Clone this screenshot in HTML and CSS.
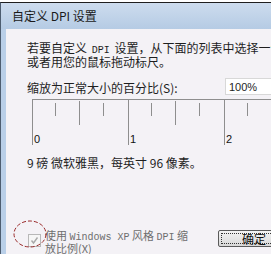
FILE: index.html
```html
<!DOCTYPE html>
<html lang="zh-CN">
<head>
    <meta charset="UTF-8">
    <title>自定义 DPI 设置</title>
    <link rel="stylesheet" href="styles.css">
</head>
<body>
    <div class="window">
        <div class="titlebar">自定义 DPI 设置</div>
        <div class="client">
            <p class="intro">若要自定义 <span class="mono wide">DPI</span> 设置，从下面的列表中选择一个百分比，<br>或者用您的鼠标拖动标尺。</p>

            <div class="scale-row">
                <label class="scale-label">缩放为正常大小的百分比(<u>S</u>):</label>
                <div class="combo">
                    <span class="combo-value">100%</span>
                    <span class="combo-arrow">▾</span>
                </div>
            </div>

            <div class="ruler">
                <div class="inch">
                    <div class="ticks">
                        <span class="tick minor"></span>
                        <span class="tick medium"></span>
                        <span class="tick minor"></span>
                    </div>
                    <span class="inch-label">0</span>
                </div>
                <div class="inch">
                    <div class="ticks">
                        <span class="tick minor"></span>
                        <span class="tick medium"></span>
                        <span class="tick minor"></span>
                    </div>
                    <span class="inch-label">1</span>
                </div>
                <div class="inch">
                    <div class="ticks">
                        <span class="tick minor"></span>
                        <span class="tick medium"></span>
                        <span class="tick minor"></span>
                    </div>
                    <span class="inch-label">2</span>
                </div>
            </div>

            <p class="info">9 磅 微软雅黑，每英寸 96 像素。</p>

            <div class="bottom-row">
                <span class="checkbox">
                    <svg width="11" height="11" viewBox="0 0 11 11"><path d="M2.5 5.5 L4.5 8 L8.5 2.5" fill="none" stroke="#a9a9a9" stroke-width="1.4"/></svg>
                </span>
                <span class="check-label">使用 <span class="mono">Windows XP</span> 风格 <span class="mono">DPI</span> 缩<br>放比例(<u>X</u>)</span>
                <button class="ok-button"><span class="focus-ring">确定</span></button>

                <svg class="mark" width="36" height="30" viewBox="0 0 36 30">
                    <ellipse cx="17" cy="15" rx="16" ry="13" fill="none" stroke="#9a2b2b" stroke-width="1" stroke-dasharray="4 2"/>
                </svg>
            </div>
        </div>
    </div>
</body>
</html>
```

FILE: styles.css
```css
body {
    margin: 0;
    padding: 0;
    width: 271px;
    height: 254px;
    overflow: hidden;
    background-color: #ffffff;
    font-family: "Noto Sans CJK SC", sans-serif;
    color: #1e1e1e;
}

.window {
    width: 340px;
    height: 251px;
    margin-top: 2px;
    border-top: 1px solid #1f1f1f;
    border-left: 1px solid #4d5d70;
    background-color: #b9cfe8;
    display: flex;
    flex-direction: column;
}

.titlebar {
    height: 28px;
    line-height: 26px;
    padding-left: 11px;
    font-size: 12px;
    color: #1a1a1a;
    background: linear-gradient(to bottom, #cddcee, #b5cbe4);
}

.client {
    flex: 1;
    margin-left: 5px;
    padding-left: 21px;
    background-color: #f4f2f6;
    position: relative;
}

.mono {
    font-family: "Liberation Mono", monospace;
    font-size: 10px;
}

.mono.wide {
    padding: 0 2px;
}

.intro {
    margin: 13px 0 0 0;
    font-size: 12px;
    line-height: 11px;
    white-space: nowrap;
}

.scale-row {
    display: grid;
    grid-template-columns: 198px auto;
    align-items: center;
    margin-top: 11px;
    height: 17px;
}

.scale-label {
    font-size: 12px;
    line-height: 14px;
    white-space: nowrap;
    padding-top: 2px;
}

.scale-label u,
.check-label u {
    text-decoration: none;
}

.combo {
    width: 70px;
    height: 15px;
    border: 1px solid #d8d8d8;
    background-color: #ffffff;
    display: flex;
    align-items: center;
    justify-content: space-between;
    font-family: "Liberation Sans", sans-serif;
    font-size: 11px;
}

.combo-value {
    padding-left: 3px;
}

.combo-arrow {
    padding-right: 8px;
    font-size: 9px;
    color: #444;
}

.ruler {
    display: flex;
    margin-top: 4px;
    margin-left: 5px;
    height: 45px;
    border-top: 1px solid #8e8e8e;
}

.inch {
    width: 96px;
    flex: 0 0 96px;
    box-sizing: border-box;
    border-left: 1px solid #8e8e8e;
    display: flex;
    flex-direction: column;
    justify-content: space-between;
}

.ticks {
    display: flex;
    align-items: flex-start;
    padding-top: 1px;
}

.tick {
    display: block;
    width: 24px;
    box-sizing: border-box;
    border-right: 1px solid #8e8e8e;
}

.tick:first-child {
    width: 23px;
}

.tick.minor {
    height: 13px;
    margin-top: 2px;
}

.tick.medium {
    height: 24px;
}

.inch-label {
    font-family: "Liberation Sans", sans-serif;
    font-size: 11px;
    line-height: 10px;
    padding-left: 1px;
    padding-bottom: 1px;
    color: #111;
}

.info {
    margin: 11px 0 0 0;
    font-size: 12px;
    line-height: 14px;
    white-space: nowrap;
}

.bottom-row {
    display: flex;
    align-items: flex-start;
    margin-top: 60px;
}

.checkbox {
    width: 13px;
    height: 13px;
    flex: 0 0 13px;
    box-sizing: border-box;
    margin-left: 1px;
    margin-top: 4px;
    border: 1px solid #b8b8b8;
    background-color: #f6f6f6;
    display: flex;
    align-items: center;
    justify-content: center;
}

.check-label {
    flex: 0 0 173px;
    margin-left: 4px;
    font-size: 11px;
    line-height: 11px;
    color: #6e6e6e;
    white-space: nowrap;
}

.ok-button {
    width: 72px;
    height: 17px;
    padding: 2px;
    border: 1px solid #5a5a5a;
    border-radius: 2px;
    background: linear-gradient(to bottom, #f4f4f4, #e6e6e6 50%, #d8d8d8);
    font-family: "Noto Sans CJK SC", sans-serif;
    font-size: 12px;
    color: #111;
    display: flex;
}

.focus-ring {
    flex: 1;
    border: 1px dotted #333;
    line-height: 9px;
    text-align: center;
}

.mark {
    position: absolute;
    left: 7px;
    top: 190px;
}
```
